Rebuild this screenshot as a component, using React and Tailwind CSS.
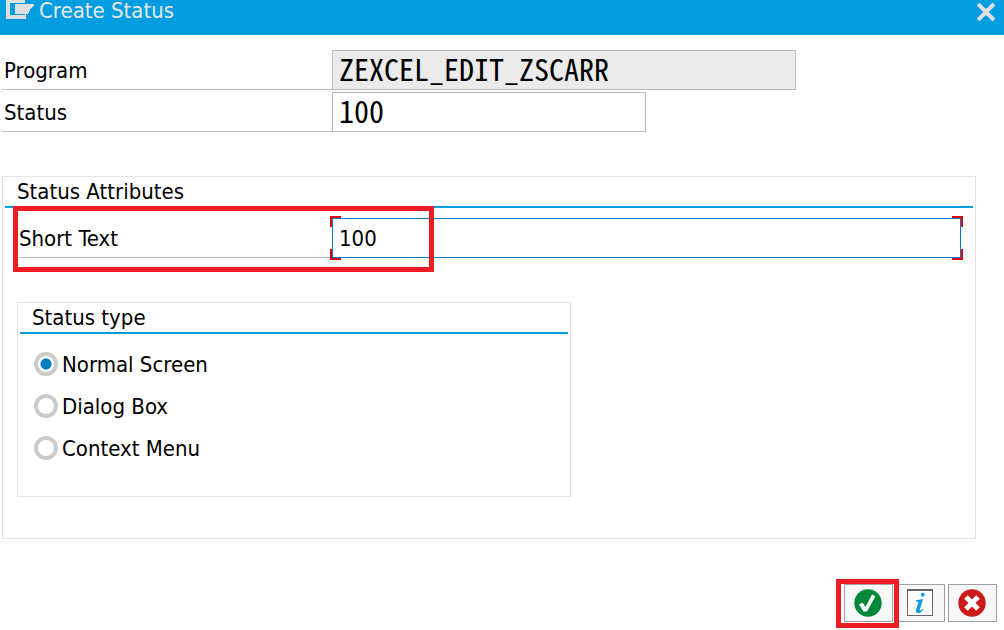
import React from "react";

const mono =
  "font-['Noto_Sans_Mono_CJK_KR','Noto_Sans_CJK_KR',monospace] [font-feature-settings:'hwid'] text-[30px] font-light leading-8 pb-1";

function TitleIcon() {
  return (
    <svg className="h-5 w-7 shrink-0" viewBox="0 0 28 20" fill="#dfdfdf" aria-hidden="true" shapeRendering="crispEdges">
      <path d="M0 0h19v3H4v12h15v-1h1v5H0z" />
      <path d="M9 4h19v1l-3 3-2 4-2 2H9z" />
    </svg>
  );
}

function CloseIcon() {
  return (
    <svg className="h-[18px] w-[18px]" viewBox="0 0 18 18" stroke="#dfdfdf" strokeWidth="4" aria-hidden="true">
      <path d="M1 1l16 16M17 1L1 17" />
      <path d="M6 9h6" strokeWidth="7" />
    </svg>
  );
}

function AcceptIcon() {
  return (
    <svg className="h-7 w-7" viewBox="0 0 28 28" aria-hidden="true">
      <circle cx="14" cy="14" r="13.7" fill="#00883a" />
      <path d="M5 15.500l3.500-2 3 4.500L18 5.500l3.500 1.800L13 22.500h-3.500z" fill="#fff" />
    </svg>
  );
}

function InfoIcon() {
  return (
    <svg className="h-7 w-7" viewBox="0 0 28 28" aria-hidden="true">
      <path d="M1 1h26v26H1z" fill="#fff" />
      <path d="M1 0h26v2H1zM1 26h26v1H1z" fill="#646464" />
      <path d="M1 0h1v27H1zM26 0h1v27h-1z" fill="#77655c" />
      <path d="M14.800 5.700a2 2 0 1 1 2 2 2 2 0 0 1-2-2z" fill="#009de0" />
      <path d="M10 11.300l7-1.200-3.200 10.500q-.3 1.400.5 1.200.8-.3 2-2l.8.6q-2.300 3.600-5 3.600-2.900 0-2-3.200l2.200-7.300q.3-1.300-2.400-1z" fill="#009de0" />
    </svg>
  );
}

function CancelIcon() {
  return (
    <svg className="h-7 w-7" viewBox="0 0 28 28" aria-hidden="true">
      <circle cx="14" cy="14" r="13.700" fill="#cc1919" />
      <path d="M8 8l12 12M20 8L8 20" stroke="#fff" strokeWidth="5" />
    </svg>
  );
}

function IconButton({ label, children }) {
  return (
    <button
      type="button"
      aria-label={label}
      className="flex h-[38px] w-[49px] items-center justify-center border border-[#a0a0a0] bg-[#f7f7f7] pr-0.5"
    >
      {children}
    </button>
  );
}

function FieldRow({ id, label, children }) {
  return (
    <div className="flex">
      <label htmlFor={id} className="flex w-[330px] shrink-0 items-center border-b border-[#bbb] pt-0.5 pl-0.5">
        {label}
      </label>
      {children}
    </div>
  );
}

function TypeOption({ label, checked }) {
  return (
    <label className="flex h-[42px] items-center gap-1">
      <input
        type="radio"
        name="status-type"
        defaultChecked={checked}
        className="size-6 appearance-none rounded-full border-4 border-[#cbcbcb] bg-white checked:bg-[radial-gradient(circle,#007cc0_5px,#fff_6px)]"
      />
      {label}
    </label>
  );
}

export default function App() {
  return (
    <main className="flex min-h-screen flex-col bg-white font-['DejaVu_Sans_Condensed','Noto_Sans',sans-serif] text-[22px] text-black">
      <header className="flex h-[35px] items-start justify-between bg-[#009de0] pr-[9px] pl-1.5">
        <div className="flex gap-[5px]">
          <TitleIcon />
          <h1 className="leading-[22px] text-[#e8e8e8]">Create Status</h1>
        </div>
        <button type="button" aria-label="Close" className="pt-[3px]">
          <CloseIcon />
        </button>
      </header>

      <form className="flex flex-col pt-[15px] pr-7 pl-0.5">
        <div className="flex flex-col gap-0.5">
          <FieldRow id="program" label="Program">
            <input
              id="program"
              readOnly
              defaultValue="ZEXCEL_EDIT_ZSCARR"
              className={`h-10 w-[464px] border border-[#bbb] bg-[#ebebeb] px-1.5 ${mono}`}
            />
          </FieldRow>
          <FieldRow id="status" label="Status">
            <input
              id="status"
              defaultValue="100"
              className={`h-10 w-[314px] border border-[#bbb] bg-white px-1.5 ${mono}`}
            />
          </FieldRow>
        </div>

        <section className="mt-11 border border-[#e3e3e3] px-0.5 pb-[41px]">
          <h2 className="border-b-2 border-[#009de0] pl-3 leading-[29px]">Status Attributes</h2>
          <div className="relative mt-2.5 flex pr-3 pl-3">
            <label htmlFor="short-text" className="flex w-[315px] shrink-0 items-center border-b border-[#bbb] pt-0.5 pl-0.5">
              Short Text
            </label>
            <div className="relative flex-1">
              <span className="absolute -top-0.5 -left-0.5 size-[11px] bg-[#e2000f]" />
              <span className="absolute -top-0.5 -right-0.5 size-[11px] bg-[#e2000f]" />
              <span className="absolute -bottom-0.5 -left-0.5 size-[11px] bg-[#e2000f]" />
              <span className="absolute -right-0.5 -bottom-0.5 size-[11px] bg-[#e2000f]" />
              <input
                id="short-text"
                defaultValue="100"
                className="relative block h-10 w-full border border-[#007cc0] bg-white px-1.5"
              />
            </div>
            <span className="pointer-events-none absolute -top-3 left-2 h-[66px] w-[421px] border-5 border-[#ef1c24]" />
          </div>

          <fieldset className="mt-11 ml-3 w-[554px] border border-[#e3e3e3] px-0.5 pb-[27px]">
            <legend className="float-left w-full border-b-2 border-[#009de0] pl-3 leading-[29px]">Status type</legend>
            <div className="clear-both flex flex-col pt-[9px] pl-3.5">
              <TypeOption label="Normal Screen" checked />
              <TypeOption label="Dialog Box" />
              <TypeOption label="Context Menu" />
            </div>
          </fieldset>
        </section>
      </form>

      <footer className="mt-[45px] flex justify-end gap-[3px] pr-[7px]">
        <div className="relative">
          <IconButton label="Continue">
            <AcceptIcon />
          </IconButton>
          <span className="pointer-events-none absolute -top-[5px] -right-1.5 -bottom-1.5 -left-2 border-5 border-[#ef1c24]" />
        </div>
        <IconButton label="Information">
          <InfoIcon />
        </IconButton>
        <IconButton label="Cancel">
          <CancelIcon />
        </IconButton>
      </footer>
    </main>
  );
}
